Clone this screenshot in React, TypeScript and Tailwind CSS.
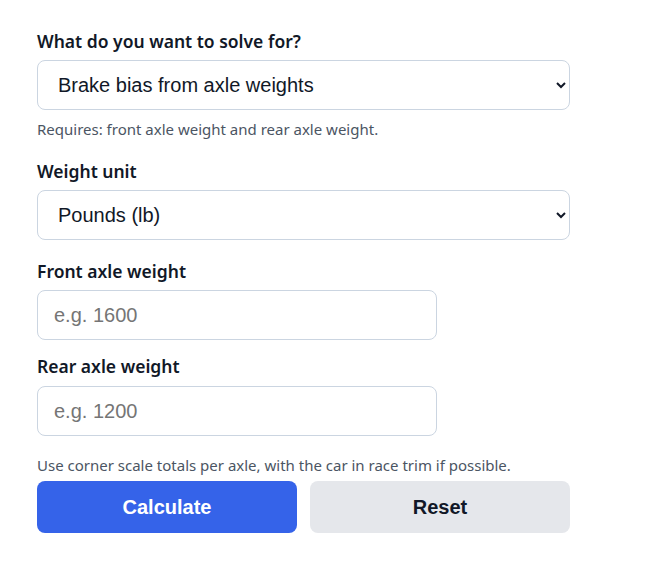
import React from "react";

export default function App() {
  const label = "block text-[17.5px] leading-[26px] font-semibold text-[#111827]";
  const help = "text-[15px] leading-[20px] text-[#4b5563]";
  const field =
    "h-[50px] rounded-lg border border-[#cbd5e1] bg-white px-4 text-[20px] text-[#111827] outline-none";
  return (
    <div
      className="min-h-[572px] w-[647px] bg-white pl-[37px] pt-[28px]"
      style={{ fontFamily: '"Noto Sans", sans-serif' }}
    >
      <div className="w-[533px]">
        <label className={label}>What do you want to solve for?</label>
        <select
          className={`${field} mt-[6px] w-full pr-[10px]`}
          style={{ fontFamily: '"Liberation Sans", Arial, sans-serif' }}
          defaultValue="bias"
        >
          <option value="bias">Brake bias from axle weights</option>
        </select>
        <p className={`${help} mt-[9px]`}>Requires: front axle weight and rear axle weight.</p>

        <label className={`${label} mt-[19px]`}>Weight unit</label>
        <select
          className={`${field} mt-[6px] w-full pr-[10px]`}
          style={{ fontFamily: '"Liberation Sans", Arial, sans-serif' }}
          defaultValue="lb"
        >
          <option value="lb">Pounds (lb)</option>
        </select>

        <label className={`${label} mt-[18px]`}>Front axle weight</label>
        <input
          className={`${field} mt-[6px] w-[400px] placeholder:text-[#757575]`}
          style={{ fontFamily: '"Liberation Sans", Arial, sans-serif' }}
          placeholder="e.g. 1600"
        />

        <label className={`${label} mt-[13px]`}>Rear axle weight</label>
        <input
          className={`${field} mt-[7px] w-[400px] placeholder:text-[#757575]`}
          style={{ fontFamily: '"Liberation Sans", Arial, sans-serif' }}
          placeholder="e.g. 1200"
        />

        <p className={`${help} mt-[19px]`}>
          Use corner scale totals per axle, with the car in race trim if possible.
        </p>

        <div
          className="mt-[6px] grid grid-cols-2 gap-[13px]"
          style={{ fontFamily: '"Liberation Sans", Arial, sans-serif' }}
        >
          <button className="h-[52px] rounded-lg bg-[#3563e9] text-[20px] font-bold text-white">
            Calculate
          </button>
          <button className="h-[52px] rounded-lg bg-[#e5e7eb] text-[20px] font-bold text-[#111827]">
            Reset
          </button>
        </div>
      </div>
    </div>
  );
}
